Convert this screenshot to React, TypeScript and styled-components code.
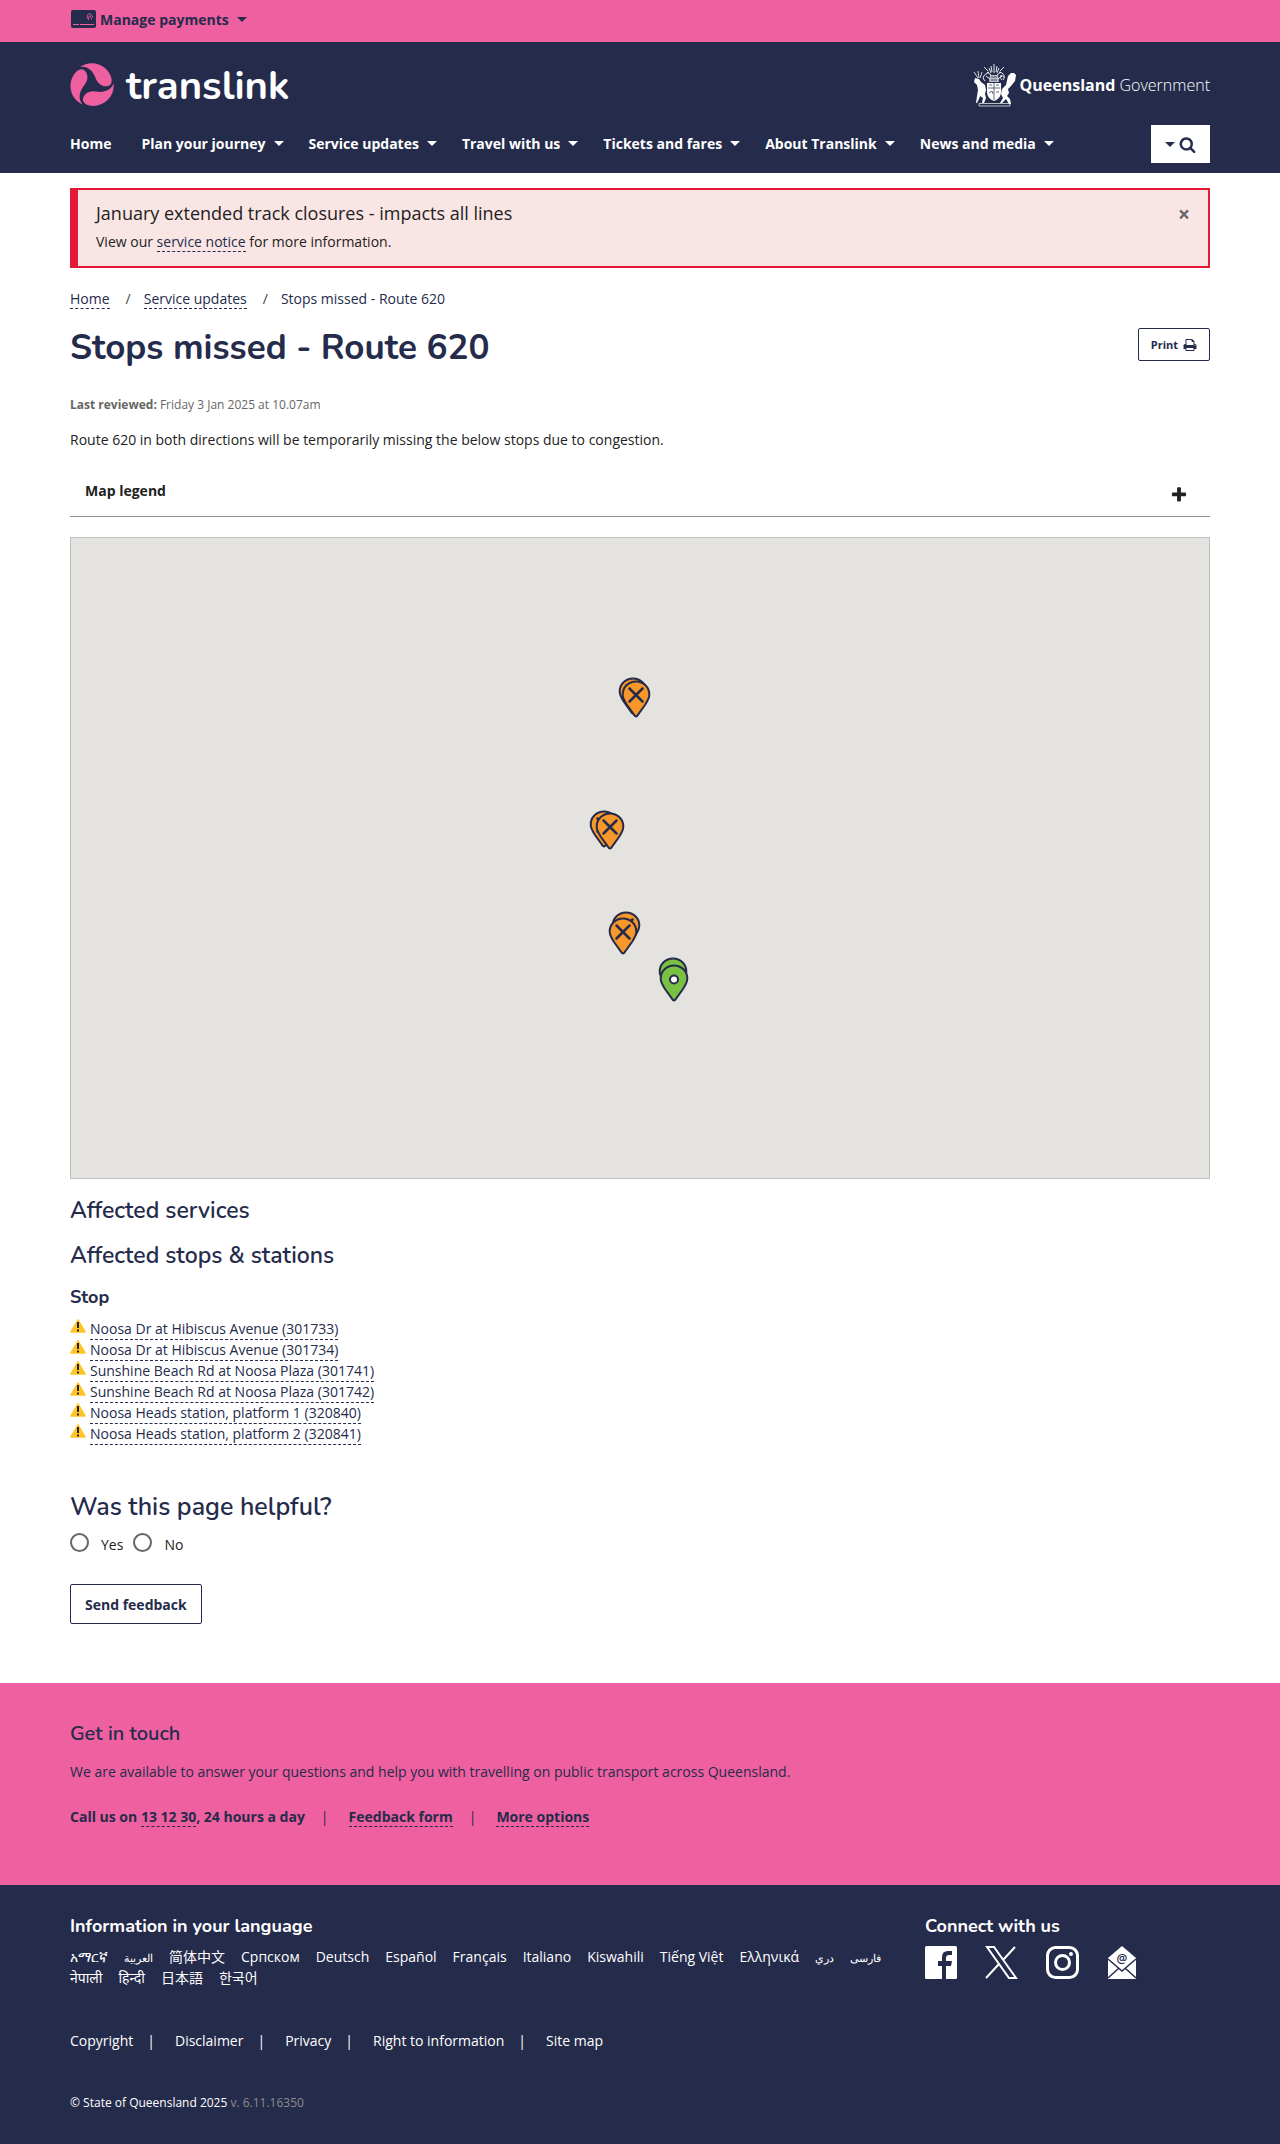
import React from "react";
import styled, { createGlobalStyle } from "styled-components";

const navy = "#252b4b";
const pink = "#ef60a0";
const bodyFont = `"Open Sans", "Noto Sans", "Noto Sans CJK SC", "Noto Sans CJK KR", sans-serif`;
const headingFont = `Nunito, "Open Sans", "Noto Sans", sans-serif`;

const GlobalStyle = createGlobalStyle`
  *, *::before, *::after { box-sizing: border-box; }
  body { margin: 0; background: #fff; color: #222; font: 14px/21px ${bodyFont}; }
  h1, h2, h3, p, ul, ol, fieldset { margin: 0; padding: 0; border: 0; }
  ul, ol { list-style: none; }
  a { color: inherit; text-decoration: none; }
  button { font: inherit; color: inherit; background: none; border: 0; padding: 0; cursor: pointer; }
  svg { display: block; flex: none; }
`;

const Container = styled.div`
  width: 100%;
  max-width: 1180px;
  margin: 0 auto;
  padding: 0 20px;
`;

const PaymentsBar = styled.div`
  background: ${pink};
  color: ${navy};
`;
const PaymentsButton = styled.button`
  display: flex;
  align-items: center;
  gap: 4px;
  height: 42px;
  padding-bottom: 4px;
  font-weight: 700;
`;
const Caret = styled.span<{ $tight?: boolean }>`
  flex: none;
  margin-left: ${(p) => (p.$tight ? 0 : 4)}px;
  border: 5px solid transparent;
  border-top-color: currentColor;
  border-bottom: 0;
`;

const Header = styled.header`
  background: ${navy};
  color: #fff;
`;
const Brands = styled.div`
  display: flex;
  align-items: center;
  justify-content: space-between;
  padding-top: 21px;
`;
const Brand = styled.a<{ $gap: number }>`
  display: flex;
  align-items: center;
  gap: ${(p) => p.$gap}px;
`;
const Wordmark = styled.span`
  padding-top: 2px;
  font: 700 40px/42px ${headingFont};
`;
const GovName = styled.span`
  font-size: 16px;
  font-weight: 300;
  b { font-weight: 700; }
`;
const NavRow = styled.div`
  display: flex;
  align-items: center;
  justify-content: space-between;
  padding: 18px 0 10px;
`;
const NavList = styled.ul`
  display: flex;
  gap: 25px;
  padding-bottom: 2px;
  font-weight: 700;
  li:first-child { margin-right: 5px; }
`;
const NavLink = styled.a`
  display: flex;
  align-items: center;
  gap: 4px;
`;
const SearchButton = styled.button`
  display: flex;
  align-items: center;
  justify-content: center;
  gap: 4px;
  width: 59px;
  height: 38px;
  background: #fff;
  color: ${navy};
`;

const Alert = styled.section`
  display: flex;
  justify-content: space-between;
  align-items: flex-start;
  margin-top: 15px;
  padding: 11px 18px 14px;
  border: 2px solid #e31937;
  border-left-width: 8px;
  background: #f9e5e3;
`;
const AlertTitle = styled.h2`
  margin-bottom: 6px;
  font-size: 18px;
  font-weight: 400;
  line-height: 24px;
`;
const CloseButton = styled.button`
  width: 12px;
  margin-top: 3px;
  color: #666;
  font-size: 21px;
  font-weight: 700;
`;
const DashedLink = styled.a`
  display: inline-block;
  line-height: 19px;
  color: ${navy};
  border-bottom: 1px dashed ${navy};
`;
const Breadcrumb = styled.ol`
  display: flex;
  margin-top: 20px;
  color: ${navy};
  li + li::before {
    content: "/";
    padding: 0 13px 0 16px;
    color: #444;
  }
`;
const TitleRow = styled.div`
  display: flex;
  align-items: flex-start;
  justify-content: space-between;
  margin-top: 19px;
`;
const Title = styled.h1`
  color: ${navy};
  font: 700 35px/40px ${headingFont};
`;
const PrintButton = styled.button`
  display: flex;
  align-items: center;
  gap: 5px;
  height: 33px;
  padding: 0 12px;
  border: 1px solid ${navy};
  border-radius: 2px;
  color: ${navy};
  font-size: 11px;
  font-weight: 700;
`;
const Reviewed = styled.p`
  margin-top: 27px;
  color: #666;
  font-size: 12px;
  line-height: 20px;
`;
const Intro = styled.p`
  margin-top: 14px;
`;
const LegendToggle = styled.button`
  display: flex;
  align-items: flex-end;
  justify-content: space-between;
  width: 100%;
  margin: 16px 0 20px;
  padding: 14px 22px 12px 15px;
  border-bottom: 1px solid #8f8f8f;
  font-weight: 700;
  span { padding-bottom: 3px; }
`;
const MapCanvas = styled.div`
  position: relative;
  height: 642px;
  border: 1px solid #bfc1c0;
  background: #e4e3df;
`;
const Pin = styled.svg<{ $x: number; $y: number }>`
  position: absolute;
  left: calc(50% + ${(p) => p.$x}px);
  top: ${(p) => p.$y}px;
`;

const SectionTitle = styled.h2<{ $top: number; $size: number }>`
  margin-top: ${(p) => p.$top}px;
  color: ${navy};
  font: 600 ${(p) => p.$size}px/30px ${headingFont};
`;
const SubTitle = styled.h3`
  margin: 14px 0 10px;
  color: ${navy};
  font: 700 18px/24px ${headingFont};
`;
const StopItem = styled.li`
  display: flex;
  gap: 4px;
  height: 21px;
`;
const Choices = styled.fieldset`
  display: flex;
  gap: 10px;
  margin-top: 10px;
`;
const Choice = styled.label`
  display: flex;
  gap: 12px;
  line-height: 26px;
`;
const Radio = styled.input`
  appearance: none;
  width: 19px;
  height: 19px;
  margin: 1px 0 0;
  border: 2px solid #666;
  border-radius: 50%;
  &:checked { background: radial-gradient(${navy} 45%, transparent 50%); }
`;
const FeedbackButton = styled.button`
  height: 40px;
  margin: 26px 0 59px;
  padding: 0 14px;
  border: 1px solid ${navy};
  border-radius: 2px;
  color: ${navy};
  font-weight: 700;
`;

const Contact = styled.section`
  padding: 36px 0 58px;
  background: ${pink};
  color: ${navy};
`;
const ContactTitle = styled.h2`
  font: 600 20px/30px ${headingFont};
`;
const ContactText = styled.p`
  margin: 12px 0 24px;
`;
const ContactLinks = styled.ul`
  display: flex;
  font-weight: 700;
  li + li::before {
    content: "|";
    padding: 0 20px 0 16px;
    font-weight: 400;
  }
`;

const Footer = styled.footer`
  padding: 27px 0 31px;
  background: ${navy};
  color: #fff;
`;
const FooterTop = styled.div`
  display: grid;
  grid-template-columns: 3fr 1fr;
`;
const FooterTitle = styled.h2`
  font: 700 18px/28px ${headingFont};
`;
const Languages = styled.ul`
  display: flex;
  flex-wrap: wrap;
  column-gap: 16px;
  margin-top: 6px;
  padding-right: 30px;
  li { height: 21px; }
  [lang="ar"], [lang="prs"], [lang="fa"] { font-size: 11px; }
`;
const Socials = styled.ul`
  display: flex;
  gap: 28px;
  margin-top: 6px;
`;
const FooterLinks = styled.ul`
  display: flex;
  margin-top: 42px;
  li + li::before {
    content: "|";
    padding: 0 20px 0 14px;
  }
`;
const Copyright = styled.p`
  margin-top: 41px;
  font-size: 12px;
  span { color: #8d8d8d; }
`;

const CardIcon = () => (
  <svg width="26" height="18" viewBox="0 0 26 18" aria-hidden="true">
    <rect x="1" width="25" height="18" rx="2" fill={navy} />
    <path d="M3 14.500h6M10 14.500h14" fill="none" stroke={pink} />
    <path d="M17 9q0-5 2-5.500t4 4M18.500 10q0-4 1-4.500t2 4" fill="none" stroke={pink} strokeWidth=".8" />
  </svg>
);

const blade = "M10 4C18-2 30-1 37 7c5 6 6 12 3 15-4 3-11 1-14-6C23 8 18 3 10 4Z";
const TranslinkMark = () => (
  <svg width="44" height="44" viewBox="0 0 44 44" fill={pink} aria-hidden="true">
    {[0, 120, 240].map((angle) => (
      <path key={angle} d={blade} transform={`rotate(${angle} 22 22)`} />
    ))}
  </svg>
);

const CoatOfArms = () => (
  <svg width="44" height="44" viewBox="0 0 44 44" fill="#fff" aria-hidden="true">
    {/* stag */}
    <path d="M2 15l4 1 2 3 4 3 1 5-1 4 1 4-2 5H9l1-5-3-2-1 3-2 4H3l1-7 1-6-1-5-3-3Z" />
    {/* brolga */}
    <path d="M35 13l3-3 3 0 2 2-1 6-4 5-3 3 1 4-2 3 3 3 1 5h-2l-3-5-4 4h-2l3-5-2-4 1-5 4-4Z" />
    <path d="M1 9l4 6M5 8l1 7M9 9l-2 6M29 17q-3-2-1-5l3 2" fill="none" stroke="#fff" strokeWidth=".8" />
    {/* shield */}
    <path d="M14 20h14v10q-1 6-7 8-6-2-7-8Z" />
    <path d="M21 20v17M15 25h12M16 22h3M23 22h3M16 30l3-2 1 3M23 29h3" fill="none" stroke={navy} strokeWidth=".7" />
    {/* helm and crest */}
    <path d="M17 12h8l1 7h-10Z" opacity=".7" />
    <path d="M12 18q-4-4 1-7l3-2M30 17q3-4-1-7l-3-1M15 8l-4-4M27 8l4-4M21 1v9M18 3l1 6M24 3l-1 6M16 5l2 5M26 5l-2 5M13 13l4 3M29 13l-4 3M14 9l4 3M28 9l-4 3" fill="none" stroke="#fff" strokeWidth=".9" />
    <path d="M18 14h6M18 17h6" stroke={navy} strokeWidth=".7" />
    {/* scroll */}
    <path d="M6 40.500h31v2.500H6Z" fill="none" stroke="#fff" strokeWidth=".7" />
  </svg>
);

const glyphs = {
  search: {
    width: 1664,
    d: "M1152 832q0-185-131.500-316.500t-316.500-131.500-316.500 131.500-131.500 316.500 131.500 316.500 316.500 131.500 316.500-131.500 131.500-316.500zM1664 1664q0 52-38 90t-90 38q-54 0-90-38l-343-342q-179 124-399 124-143 0-273.500-55.500t-225-150-150-225-55.500-273.500 55.500-273.500 150-225 225-150 273.500-55.500 273.500 55.500 225 150 150 225 55.500 273.500q0 220-124 399l343 343q37 37 37 90z",
  },
  print: {
    width: 1664,
    d: "M384 1536h896v-256h-896v256zM384 896h896v-384h-160q-40 0-68-28t-28-68v-160h-640v640zM1536 960q0-26-19-45t-45-19-45 19-19 45 19 45 45 19 45-19 19-45zM1664 960v416q0 13-9.500 22.500t-22.500 9.500h-224v160q0 40-28 68t-68 28h-960q-40 0-68-28t-28-68v-160h-224q-13 0-22.500-9.500t-9.500-22.500v-416q0-79 56.500-135.500t135.500-56.500h64v-544q0-40 28-68t68-28h672q40 0 88 20t76 48l152 152q28 28 48 76t20 88v256h64q79 0 135.500 56.500t56.500 135.500z",
  },
  plus: {
    width: 1408,
    d: "M1408 736v192q0 40-28 68t-68 28h-416v416q0 40-28 68t-68 28h-192q-40 0-68-28t-28-68v-416h-416q-40 0-68-28t-28-68v-192q0-40 28-68t68-28h416v-416q0-40 28-68t68-28h192q40 0 68 28t28 68v416h416q40 0 68 28t28 68z",
  },
};

const Glyph = ({ name, size }: { name: keyof typeof glyphs; size: number }) => (
  <svg height={size} width={size} viewBox={`0 0 ${glyphs[name].width} 1792`} fill="currentColor" aria-hidden="true">
    <path d={glyphs[name].d} />
  </svg>
);

const Warning = () => (
  <svg width="16" height="14" viewBox="0 0 16 14" aria-hidden="true">
    <path d="M8 1 15 13H1Z" fill="#ffc526" stroke="#ffc526" strokeWidth="1.500" strokeLinejoin="round" />
    <path d="M8 3v6M8 10.500v2" stroke="#222" strokeWidth="2" />
  </svg>
);

type Marker = { x: number; y: number; open?: boolean };
const markers: Marker[] = [
  { x: -22, y: 139 },
  { x: -19, y: 142 },
  { x: -51, y: 272 },
  { x: -45, y: 274 },
  { x: -29, y: 373 },
  { x: -32, y: 379 },
  { x: 18, y: 419, open: true },
  { x: 19, y: 426, open: true },
];

const MapPin = ({ x, y, open }: Marker) => (
  <Pin $x={x} $y={y} width="30" height="38" viewBox="0 0 30 38" aria-hidden="true">
    <path
      d="M15 1.500C7.500 1.500 1.700 7.300 1.700 14.500c0 4 2.300 7.500 4.300 10.500l8 11q1 1 2 0l8-11c2-3 4.300-6.500 4.300-10.500C28.300 7.300 22.500 1.500 15 1.500Z"
      fill={open ? "#7ac143" : "#f8972a"}
      stroke={navy}
      strokeWidth="2"
    />
    {open ? (
      <circle cx="15" cy="15.500" r="4" fill="#fff" stroke={navy} strokeWidth="2" />
    ) : (
      <path d="M8.500 8.500 21.500 21.500M21.500 8.500 8.500 21.500" stroke={navy} strokeWidth="2.500" strokeLinecap="round" />
    )}
  </Pin>
);

const navItems = ["Home", "Plan your journey", "Service updates", "Travel with us", "Tickets and fares", "About Translink", "News and media"];
const stops = [
  "Noosa Dr at Hibiscus Avenue (301733)",
  "Noosa Dr at Hibiscus Avenue (301734)",
  "Sunshine Beach Rd at Noosa Plaza (301741)",
  "Sunshine Beach Rd at Noosa Plaza (301742)",
  "Noosa Heads station, platform 1 (320840)",
  "Noosa Heads station, platform 2 (320841)",
];
const languages = [
  ["am", "አማርኛ"],
  ["ar", "العربية"],
  ["zh", "简体中文"],
  ["sr", "Српском"],
  ["de", "Deutsch"],
  ["es", "Español"],
  ["fr", "Français"],
  ["it", "Italiano"],
  ["sw", "Kiswahili"],
  ["vi", "Tiếng Việt"],
  ["el", "Ελληνικά"],
  ["prs", "دري"],
  ["fa", "فارسی"],
  ["ne", "नेपाली"],
  ["hi", "हिन्दी"],
  ["ja", "日本語"],
  ["ko", "한국어"],
];
const footerLinks = ["Copyright", "Disclaimer", "Privacy", "Right to information", "Site map"];

const SocialIcons = () => (
  <Socials>
    <li>
      <a href="#facebook" aria-label="Facebook">
        <svg width="32" height="33" viewBox="0 0 32 33">
          <rect width="32" height="33" rx="1.500" fill="#fff" />
          <path d="M17 33V20h-4v-5h4v-4q0-6 6-6h4v4h-3q-3 0-3 3v3h6l-1 5h-5v13Z" fill={navy} />
        </svg>
      </a>
    </li>
    <li>
      <a href="#x" aria-label="X">
        <svg width="33" height="33" viewBox="0 0 33 33" fill="none" stroke="#fff" strokeWidth="2">
          <path d="M2 1h7l22 31h-7ZM1 32l13-14M30 1 18 14" />
        </svg>
      </a>
    </li>
    <li>
      <a href="#instagram" aria-label="Instagram">
        <svg width="33" height="33" viewBox="0 0 33 33" fill="none" stroke="#fff" strokeWidth="3">
          <rect x="1.500" y="1.500" width="30" height="30" rx="8" />
          <circle cx="16.500" cy="16.500" r="7" />
          <circle cx="25" cy="8" r="2" fill="#fff" stroke="none" />
        </svg>
      </a>
    </li>
    <li>
      <a href="#email" aria-label="Email">
        <svg width="30" height="33" viewBox="0 0 30 33">
          <path d="M15 0 29 12v21H1V12Z" fill="#fff" />
          <path d="m1 13 14 12 14-12M1 32l11-10M29 32 18 22" fill="none" stroke={navy} strokeWidth="1.500" />
          <text x="15" y="17" fill={navy} fontFamily="Open Sans, sans-serif" fontSize="12" fontWeight="600" textAnchor="middle">@</text>
        </svg>
      </a>
    </li>
  </Socials>
);

export default function App() {
  return (
    <>
      <GlobalStyle />
      <PaymentsBar>
        <Container>
          <PaymentsButton type="button">
            <CardIcon />
            Manage payments
            <Caret />
          </PaymentsButton>
        </Container>
      </PaymentsBar>
      <Header>
        <Container>
          <Brands>
            <Brand $gap={12} href="#home">
              <TranslinkMark />
              <Wordmark>translink</Wordmark>
            </Brand>
            <Brand $gap={3} href="#qld">
              <CoatOfArms />
              <GovName><b>Queensland</b> Government</GovName>
            </Brand>
          </Brands>
          <NavRow>
            <nav>
              <NavList>
                {navItems.map((item, i) => (
                  <li key={item}>
                    <NavLink href="#nav">{item}{i > 0 && <Caret />}</NavLink>
                  </li>
                ))}
              </NavList>
            </nav>
            <SearchButton type="button" aria-label="Search">
              <Caret $tight />
              <Glyph name="search" size={17} />
            </SearchButton>
          </NavRow>
        </Container>
      </Header>
      <main>
        <Container>
          <Alert>
            <div>
              <AlertTitle>January extended track closures - impacts all lines</AlertTitle>
              <p>View our <DashedLink href="#notice">service notice</DashedLink> for more information.</p>
            </div>
            <CloseButton type="button" aria-label="Close">×</CloseButton>
          </Alert>
          <Breadcrumb>
            <li><DashedLink href="#home">Home</DashedLink></li>
            <li><DashedLink href="#updates">Service updates</DashedLink></li>
            <li>Stops missed - Route 620</li>
          </Breadcrumb>
          <TitleRow>
            <Title>Stops missed - Route 620</Title>
            <PrintButton type="button">Print <Glyph name="print" size={14} /></PrintButton>
          </TitleRow>
          <Reviewed><b>Last reviewed:</b> Friday 3 Jan 2025 at 10.07am</Reviewed>
          <Intro>Route 620 in both directions will be temporarily missing the below stops due to congestion.</Intro>
          <LegendToggle type="button">
            <span>Map legend</span>
            <Glyph name="plus" size={18} />
          </LegendToggle>
          <MapCanvas>
            {markers.map((m) => <MapPin key={`${m.x},${m.y}`} {...m} />)}
          </MapCanvas>
          <SectionTitle $top={17} $size={23}>Affected services</SectionTitle>
          <SectionTitle $top={15} $size={23}>Affected stops &amp; stations</SectionTitle>
          <SubTitle>Stop</SubTitle>
          <ul>
            {stops.map((stop) => (
              <StopItem key={stop}>
                <Warning />
                <DashedLink href="#stop">{stop}</DashedLink>
              </StopItem>
            ))}
          </ul>
          <SectionTitle $top={47} $size={25}>Was this page helpful?</SectionTitle>
          <Choices aria-label="Was this page helpful?">
            <Choice><Radio type="radio" name="helpful" />Yes</Choice>
            <Choice><Radio type="radio" name="helpful" />No</Choice>
          </Choices>
          <FeedbackButton type="button">Send feedback</FeedbackButton>
        </Container>
      </main>
      <Contact>
        <Container>
          <ContactTitle>Get in touch</ContactTitle>
          <ContactText>We are available to answer your questions and help you with travelling on public transport across Queensland.</ContactText>
          <ContactLinks>
            <li>Call us on <DashedLink href="tel:131230">13 12 30</DashedLink>, 24 hours a day</li>
            <li><DashedLink href="#feedback">Feedback form</DashedLink></li>
            <li><DashedLink href="#options">More options</DashedLink></li>
          </ContactLinks>
        </Container>
      </Contact>
      <Footer>
        <Container>
          <FooterTop>
            <section>
              <FooterTitle>Information in your language</FooterTitle>
              <Languages>
                {languages.map(([code, name]) => (
                  <li key={code}><a href="#language" lang={code}>{name}</a></li>
                ))}
              </Languages>
            </section>
            <section>
              <FooterTitle>Connect with us</FooterTitle>
              <SocialIcons />
            </section>
          </FooterTop>
          <FooterLinks>
            {footerLinks.map((l) => <li key={l}><a href="#info">{l}</a></li>)}
          </FooterLinks>
          <Copyright>© State of Queensland 2025 <span>v. 6.11.16350</span></Copyright>
        </Container>
      </Footer>
    </>
  );
}
